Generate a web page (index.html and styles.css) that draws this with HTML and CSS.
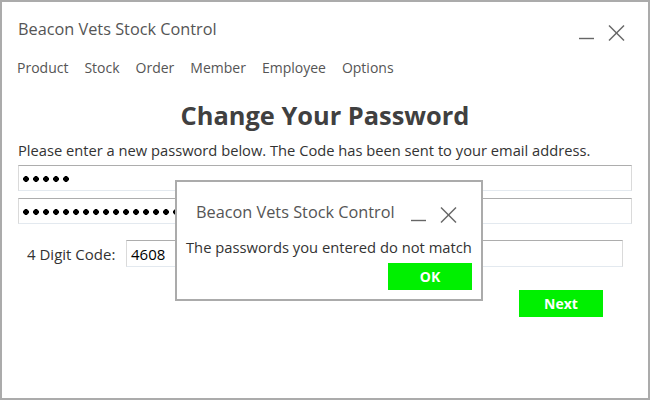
FILE: index.html
```html
<!DOCTYPE html>
<html>
<head>
<meta charset="utf-8">
<link rel="stylesheet" href="styles.css">
</head>
<body>
<div class="window">
  <div class="titlebar">
    <div class="app-title">Beacon Vets Stock Control</div>
    <svg class="win-controls" width="46" height="16" viewBox="0 0 46 16">
      <line x1="0" y1="13.5" x2="15" y2="13.5" stroke="#666" stroke-width="1.4"/>
      <line x1="30" y1="0.5" x2="45" y2="15.5" stroke="#666" stroke-width="1.4"/>
      <line x1="45" y1="0.5" x2="30" y2="15.5" stroke="#666" stroke-width="1.4"/>
    </svg>
  </div>
  <nav class="menu">
    <span>Product</span><span>Stock</span><span>Order</span><span>Member</span><span>Employee</span><span>Options</span>
  </nav>
  <h1 class="heading">Change Your Password</h1>
  <p class="info">Please enter a new password below. The Code has been sent to your email address.</p>
  <div class="field"><span class="dots dots-5"></span></div>
  <div class="field"><span class="dots dots-long"></span></div>
  <div class="code-row">
    <label class="code-label">4 Digit Code:</label>
    <div class="field code-field">4608</div>
  </div>
  <div class="actions">
    <div class="btn">Next</div>
  </div>

  <div class="dialog">
    <div class="dialog-titlebar">
      <div class="dialog-title">Beacon Vets Stock Control</div>
      <svg class="dialog-controls" width="46" height="16" viewBox="0 0 46 16">
        <line x1="0" y1="13.5" x2="15" y2="13.5" stroke="#666" stroke-width="1.4"/>
        <line x1="30" y1="0.5" x2="45" y2="15.5" stroke="#666" stroke-width="1.4"/>
        <line x1="45" y1="0.5" x2="30" y2="15.5" stroke="#666" stroke-width="1.4"/>
      </svg>
    </div>
    <div class="dialog-msg">The passwords you entered do not match</div>
    <div class="dialog-actions"><div class="btn">OK</div></div>
  </div>
</div>
</body>
</html>
```
FILE: styles.css
```css
* { box-sizing: border-box; }
html, body { margin: 0; padding: 0; background: #fff; }
.window {
  position: relative;
  width: 650px;
  height: 400px;
  border: 2px solid #ababab;
  font-family: "Open Sans", "Noto Sans", sans-serif;
  color: #333;
  padding: 0 0 0 16px;
}
.titlebar {
  display: flex;
  align-items: flex-start;
  justify-content: space-between;
  padding-top: 16px;
  padding-right: 23px;
}
.app-title {
  font-size: 16.3px;
  line-height: 22px;
  color: #555;
}
.win-controls { margin-top: 7px; }
.menu {
  display: flex;
  gap: 16px;
  margin-top: 17px;
  margin-left: -1px;
  font-size: 14px;
  line-height: 20px;
  color: #555;
}
.heading {
  margin: 21px 0 0 -16px;
  text-align: center;
  font-size: 25.4px;
  line-height: 32px;
  font-weight: 700;
  color: #404040;
}
.info {
  margin: 9px 0 0 0;
  font-size: 14.7px;
  line-height: 20px;
  color: #333;
}
.field {
  height: 26px;
  margin-right: 16px;
  border: 1px solid;
  border-color: #adadad #dadada #e3e9ef #dadada;
  display: flex;
  align-items: center;
  padding-left: 4px;
}
.info + .field { margin-top: 5px; }
.field + .field { margin-top: 7px; }
.dots {
  display: block;
  height: 6px;
  margin-top: 2px;
  background: radial-gradient(circle at 3px 3px, #000 2.6px, transparent 3.1px) 0 0 / 10px 6px repeat-x;
}
.dots-5 { width: 50px; }
.dots-long { width: 170px; }
.code-row {
  display: flex;
  align-items: center;
  margin-top: 16px;
  padding-left: 9px;
}
.code-label {
  width: 99px;
  font-size: 15px;
  color: #333;
}
.code-field {
  flex: 1;
  height: 27px;
  margin-right: 25px;
  font-size: 15px;
  color: #000;
}
.actions {
  display: flex;
  justify-content: flex-end;
  margin-top: 23px;
  padding-right: 45px;
}
.btn {
  width: 84px;
  height: 27px;
  background: #00f000;
  color: #fff;
  font-weight: 700;
  font-size: 14px;
  display: flex;
  align-items: center;
  justify-content: center;
}
.dialog {
  position: absolute;
  left: 173px;
  top: 178px;
  width: 308px;
  height: 121px;
  background: #fff;
  border: 2px solid #ababab;
  padding: 0 9px 0 9px;
}
.dialog-titlebar {
  display: flex;
  justify-content: space-between;
  align-items: flex-start;
  padding: 19px 15px 0 10px;
}
.dialog-title {
  font-size: 16.3px;
  line-height: 22px;
  color: #555;
}
.dialog-controls { margin-top: 6px; }
.dialog-msg {
  margin-top: 14px;
  font-size: 14.75px;
  line-height: 20px;
  color: #333;
}
.dialog-actions {
  display: flex;
  justify-content: flex-end;
  margin-top: 6px;
}
```
